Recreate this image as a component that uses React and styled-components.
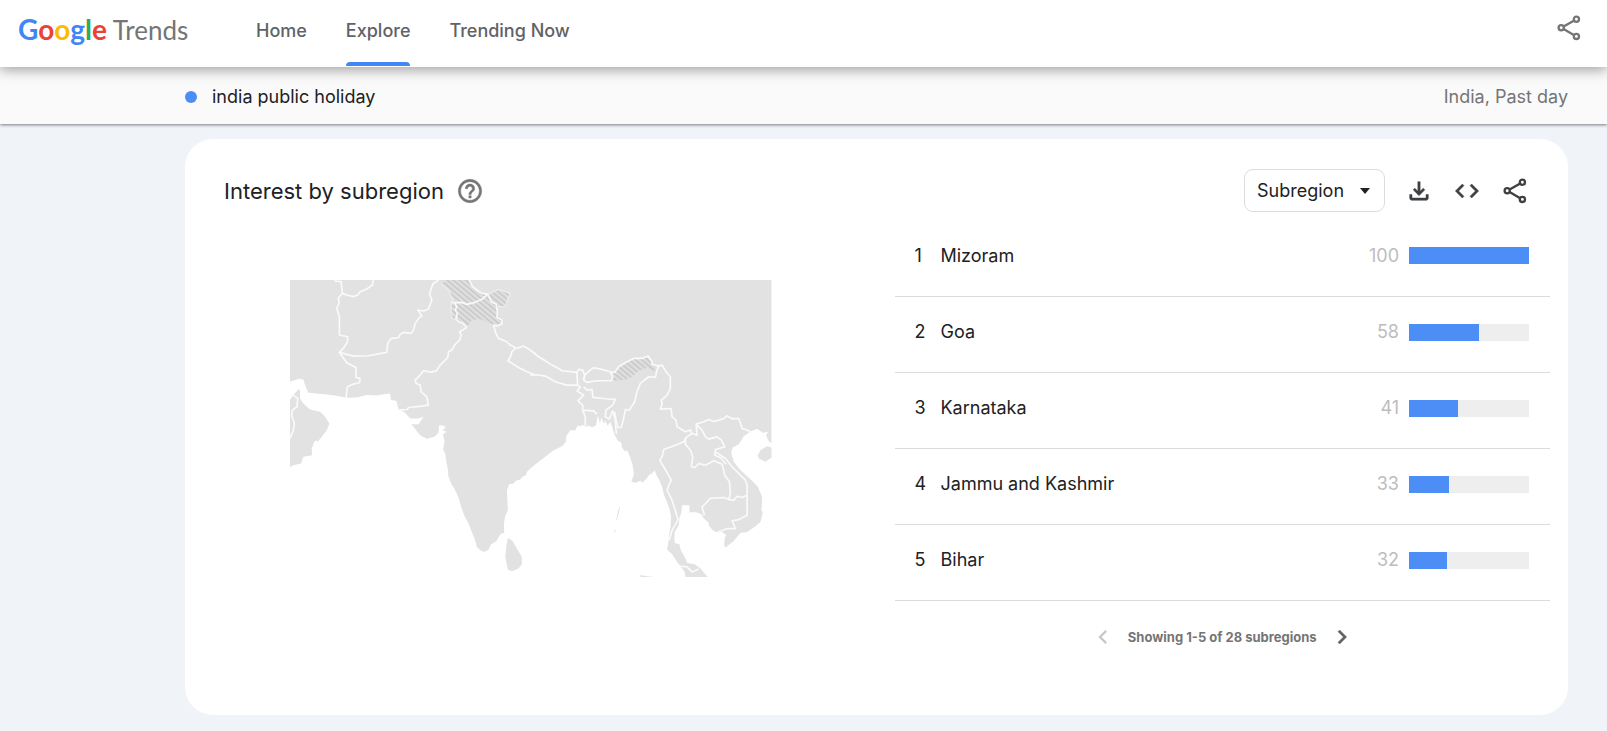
/*
 * TrendsPage
 *
 * Interest by subregion for a single search term
 */
import React from 'react';
import styled, { createGlobalStyle } from 'styled-components';
import {
  MdChevronLeft,
  MdChevronRight,
  MdCode,
  MdHelpOutline,
  MdOutlineFileDownload,
} from 'react-icons/md';

const GlobalStyle = createGlobalStyle`
  * {
    box-sizing: border-box;
  }

  body {
    margin: 0;
    background-color: #f0f4f9;
    color: #202124;
    font-family: Inter, 'Open Sans', sans-serif;
    font-size: 18px;
    line-height: 24px;
  }
`;

const TopBar = styled.header`
  position: relative;
  z-index: 2;
  display: flex;
  align-items: stretch;
  height: 67px;
  padding: 0 24px 0 18px;
  background-color: white;
  box-shadow: 0 3px 12px rgba(0, 0, 0, 0.36);
`;

const Logo = styled.a`
  width: 238px;
  padding-top: 11px;
  font-family: Lato, sans-serif;
  font-size: 26px;
  line-height: 36px;
  color: #757575;
  text-decoration: none;
  white-space: nowrap;
`;

const Letter = styled.span`
  color: ${(props) => props.$color};
  font-size: 28px;
  font-weight: 700;
`;

const Nav = styled.nav`
  display: flex;
  flex: 1;
  gap: 39px;
`;

const NavLink = styled.a`
  display: flex;
  flex-direction: column;
  justify-content: space-between;
  padding: 19px 0 1px;
  color: #5f6368;
  font-weight: 500;
  text-decoration: none;

  &[aria-current]::after {
    height: 4px;
    border-radius: 4px 4px 0 0;
    background-color: #4285f4;
    content: '';
  }
`;

const IconButton = styled.button`
  display: flex;
  align-items: center;
  justify-content: center;
  width: 28px;
  height: 28px;
  padding: 0;
  border: none;
  background: none;
  color: ${(props) => props.$color || '#3c4043'};
  font-size: 28px;
  cursor: pointer;

  /* the icon set ships an empty bounding path */
  path[fill='none'] {
    stroke: none;
  }

  &:disabled {
    color: #c8c8c8;
    cursor: default;
  }
`;

const TopActions = styled.div`
  padding-top: 14px;
`;

const TermBar = styled.div`
  position: relative;
  z-index: 1;
  display: flex;
  align-items: center;
  justify-content: space-between;
  height: 57px;
  padding: 2px 39px 0 185px;
  background-color: #fafafa;
  box-shadow: 0 1px 3px rgba(0, 0, 0, 0.5);
`;

const Term = styled.div`
  display: flex;
  align-items: center;
  gap: 15px;

  &::before {
    width: 12px;
    height: 12px;
    border-radius: 50%;
    background-color: #4c8df6;
    content: '';
  }
`;

const Scope = styled.div`
  color: #757575;
`;

const Card = styled.section`
  margin: 15px 39px 16px 185px;
  border-radius: 28px;
  background-color: white;
`;

const CardHeader = styled.div`
  display: flex;
  align-items: center;
  justify-content: space-between;
  padding: 30px 39px 8px;
`;

const Title = styled.h2`
  display: flex;
  align-items: center;
  gap: 12px;
  margin: 0;
  font-size: 22px;
  font-weight: 400;
  line-height: 28px;
`;

const Tools = styled.div`
  display: flex;
  align-items: center;
  gap: 20px;
`;

const SelectBox = styled.label`
  display: grid;
  align-items: center;

  > * {
    grid-area: 1 / 1;
  }

  svg {
    justify-self: end;
    margin-right: 15px;
    pointer-events: none;
  }
`;

const Select = styled.select`
  width: 141px;
  height: 43px;
  padding: 0 12px;
  border: 1px solid #dadce0;
  border-radius: 9px;
  background-color: white;
  color: #202124;
  font: inherit;
  appearance: none;
`;

const Columns = styled.div`
  display: grid;
  grid-template-columns: 1fr 1fr;
`;

const MapArea = styled.div`
  padding: 60px 105px 0;

  svg {
    display: block;
    width: 100%;
  }
`;

const ListArea = styled.div`
  padding: 0 18px 64px;
`;

const Table = styled.table`
  width: 100%;
  border-collapse: collapse;
`;

const Row = styled.tr`
  height: 76px;
  border-bottom: 1px solid #dcdcdc;
`;

const Cell = styled.td`
  width: ${(props) => props.$width || 'auto'};
  padding: 0 0 4px ${(props) => props.$indent || 0}px;
  text-align: ${(props) => props.$align || 'left'};
  color: ${(props) => (props.$muted ? '#bdbdbd' : 'inherit')};
`;

const Track = styled.div`
  width: 120px;
  height: 17px;
  margin: 0 21px 0 10px;
  background-color: #eee;
`;

const Fill = styled.div`
  height: 100%;
  background-color: #4c8df6;
`;

const Pager = styled.div`
  display: flex;
  align-items: center;
  justify-content: center;
  gap: 11px;
  padding-top: 22px;
  color: #757575;
  font-size: 13px;
  font-weight: 700;
`;

const subregions = [
  { name: 'Mizoram', value: 100 },
  { name: 'Goa', value: 58 },
  { name: 'Karnataka', value: 41 },
  { name: 'Jammu and Kashmir', value: 33 },
  { name: 'Bihar', value: 32 },
];

const logoLetters = [
  ['G', '#4285f4'],
  ['o', '#ea4335'],
  ['o', '#fbbc05'],
  ['g', '#4285f4'],
  ['l', '#34a853'],
  ['e', '#ea4335'],
];

const ShareIcon = () => (
  <svg width="28" height="28" viewBox="0 0 28 28" fill="none" stroke="currentColor" strokeWidth="2.3">
    <path d="M8.6 12.6L19.2 6.4M8.6 15L19.2 21.2" />
    <circle cx="6.2" cy="13.8" r="2.6" />
    <circle cx="21.4" cy="5.2" r="2.6" />
    <circle cx="21.4" cy="22.4" r="2.6" />
  </svg>
);

const RegionMap = () => (
  <svg viewBox="0 0 1443 891" role="img" aria-label="Map of India">
    <defs>
      <pattern id="disputed" width="12" height="12" patternUnits="userSpaceOnUse" patternTransform="rotate(-50)">
        <rect width="12" height="12" fill="#dedede" />
        <rect width="4" height="12" fill="#c6c6c6" />
      </pattern>
    </defs>

    {/* land */}
    <g fill="#e2e2e2">
      <path d="M0 0H1443V490L1433 480 1427 465 1433 455 1417 458 1400 446 1380 454 1360 468 1345 492 1327 502 1322 518 1330 545 1350 570 1385 602 1402 620 1415 650 1413 690 1417 695 1410 725 1390 742 1370 755 1350 758 1330 782 1305 802 1301 795 1303 772 1308 765 1295 755 1275 755 1265 748 1257 738 1253 725 1240 715 1233 702 1217 696 1197 696 1197 675 1175 675 1173 695 1167 715 1165 735 1153 755 1152 775 1153 788 1167 792 1171 810 1183 830 1191 848 1213 852 1230 865 1253 891H1185L1183 875 1170 858 1160 845 1145 822 1130 808 1135 780 1137 760 1141 735 1142 710 1138 688 1130 665 1121 645 1115 620 1107 600 1097 582 1093 570 1087 578 1075 585 1067 598 1055 608 1050 602 1037 608 1023 605 1031 582 1027 555 1017 525 1010 510 1004 514 995 502 993 488 982 480 973 465 967 445 960 425 952 437 945 422 940 430 933 412 929 430 923 405 917 435 905 442 896 436 885 442 878 434 870 438 862 436 855 450 840 450 827 470 827 485 815 498 790 510 765 530 730 557 710 575 707 585 697 590 690 598 677 602 670 610 657 612 650 630 651 650 652 675 653 690 645 708 641 730 642 758 633 760 625 770 619 782 603 792 595 808 583 815 570 810 560 800 553 775 543 750 533 725 523 708 513 680 505 652 495 630 483 610 475 590 473 568 468 540 465 520 459 508 463 485 459 462 470 455 457 450 467 442 459 436 447 435 445 458 433 470 410 476 390 465 370 440 363 432 385 432 397 415 400 410 385 415 360 415 347 400 335 392 325 388 321 370 318 362 303 360 300 340 285 342 260 346 230 345 200 352 170 353 135 346 95 342 55 338 47 320 40 298 27 296 0 305Z" />
      <path d="M0 360L10 345 25 328 30 330 30 355 40 370 60 388 90 395 105 410 118 430 110 450 95 470 83 485 78 480 73 485 65 505 66 525 40 530 33 550 10 555 0 561Z" />
      <path d="M653 773L667 782 680 805 695 830 695 852 685 865 665 873 653 868 645 830 648 800Z" />
      <path d="M1402 525L1410 510 1430 498 1443 502V532L1425 545 1405 535Z" />
      <path d="M1050 884L1065 887 1097 891H1050Z" />
      <path d="M989 675L984 690 981 705 977 720 979 720 984 705 987 692Z" />
      <path d="M972 748h3v8h-3z" />
    </g>

    {/* disputed areas */}
    <g fill="url(#disputed)">
      <path d="M453 12L470 0H537L547 20 565 35 593 42 625 28 660 40 650 60 645 80 618 80 625 100 637 125 625 133 610 135 570 117 545 120 530 142 500 120 485 115 482 75 490 65 475 30Z" />
      <path d="M967 280L985 260 1010 245 1030 235 1055 235 1070 230 1080 242 1085 252 1100 268 1090 272 1070 263 1045 272 1025 290 1005 300 967 302Z" />
    </g>

    {/* borders */}
    <g fill="none" stroke="#fafafa" strokeWidth="5" strokeLinejoin="round">
      <g transform="translate(-15 -30)">
        <path d="M147 33L168 35 172 70 160 85 162 100 155 115 163 140 163 195 188 200 187 215 175 235 163 247 205 258 250 257 305 247 308 220 318 205 340 203 345 193 355 187 378 190 386 178 390 160 403 142 410 138 398 120 415 123 430 117 440 90 433 72 443 42 460 30" />
        <path d="M172 70L185 75 205 80 218 75 225 65 245 57 262 45 265 30M163 247L185 278 213 292 213 322 225 325 223 338 205 342 187 350 183 383" />
        <path d="M545 172L523 185 528 195 523 210 508 225 500 240 490 245 488 262 465 285 453 303 435 306 415 302 405 315 390 330 393 340 405 345 408 365 425 380 430 405 410 408 370 412 367 418 340 420" />
        <path d="M497 98L530 97 545 103 570 97 590 88 608 72 590 70 575 60 562 50 552 30M508 97L515 110 510 120 517 130 512 145 520 155 530 158 545 172" />
        <path d="M608 72L618 95 633 103 637 130 635 142 650 150 650 162 635 168 625 165 632 190 640 205 665 215 675 225 695 235 715 228 735 240 750 250M690 235L680 245 676 260 668 272 700 292 725 305 750 315" />
        <path d="M25 375L38 385 36 410 22 420 20 435 28 460 25 480 15 505" />
      </g>
      <path d="M453 12L475 30 490 65 482 75 485 115 500 120M593 42L625 28 660 40 645 80 618 80" stroke="#ececec" strokeWidth="4" />
      <g transform="translate(705 180)">
        <path d="M15 30L40 50 60 62 80 75 100 85 110 92 155 97 160 88 172 90 178 105 175 120M15 105L35 104 60 108 90 125 125 135 157 135 155 97" />
        <path d="M175 120L180 103 195 90 205 83 230 88 255 95 262 112 258 122 215 122 185 127ZM258 97L268 97 280 80 305 65 325 55 350 55 368 48 380 65 380 72 400 78 395 90 390 112 370 110 345 130 335 155 328 185 312 210 300 208 295 235 288 262 278 262 272 240 268 215" />
        <path d="M400 78L410 75 422 95 435 110 435 145 425 165 408 180 410 192 405 207 437 205 440 230 452 240 455 260 480 275 495 270 500 280 485 290 475 305 450 315 415 328 410 350 403 360M480 292L480 312 495 330 502 350 498 380" />
        <path d="M157 135L165 142 155 152 175 165 158 182 172 195 172 210 180 230 180 262M175 140L185 150 200 148 203 172 240 176 270 178 262 195 242 210 240 230 252 237 262 212 270 240 273 282M172 210L205 212 215 222" />
        <path d="M500 280L515 285 512 252 535 245 550 238 565 244 580 240 595 235 605 227 620 236 640 235 650 265 665 270 680 278M515 255L530 270 540 290 550 297 575 290 588 300 598 320 570 328 568 345 585 352 602 372" />
      </g>
      <g transform="translate(705 510)">
        <path d="M403 30L418 55 432 80 438 90 432 100 425 120 438 145 448 175 458 208 440 240 432 270M498 50L508 52 520 40 540 45 565 32 590 42 598 75 612 95 615 130 610 148" />
        <path d="M570 5L600 25 620 50 650 80 660 90 665 105 665 135 650 142 635 138 625 150 610 148 595 142 555 144 540 160 530 170 537 195M665 135L665 195 640 208 620 212 630 235 605 235 575 247M465 348L485 350 500 365 520 356" />
      </g>
    </g>
  </svg>
);

export default class TrendsPage extends React.Component {
  constructor(props) {
    super(props);
    this.state = {
      resolution: 'Subregion',
    };
    this.handleResolution = this.handleResolution.bind(this);
  }

  handleResolution(e) {
    this.setState({ resolution: e.target.value });
  }

  render() {
    return (
      <div>
        <GlobalStyle />
        <TopBar>
          <Logo href="#home">
            {logoLetters.map(([letter, color], i) => (
              <Letter key={i} $color={color}>{letter}</Letter>
            ))}
            {' Trends'}
          </Logo>
          <Nav>
            <NavLink href="#home">Home</NavLink>
            <NavLink href="#explore" aria-current="page">Explore</NavLink>
            <NavLink href="#trending">Trending Now</NavLink>
          </Nav>
          <TopActions>
            <IconButton aria-label="Share page" $color="#757575"><ShareIcon /></IconButton>
          </TopActions>
        </TopBar>
        <TermBar>
          <Term>india public holiday</Term>
          <Scope>India, Past day</Scope>
        </TermBar>
        <Card>
          <CardHeader>
            <Title>
              Interest by subregion
              <IconButton aria-label="Help" $color="#757575"><MdHelpOutline strokeWidth="0.4" /></IconButton>
            </Title>
            <Tools>
              <SelectBox>
                <Select
                  aria-label="Resolution"
                  value={this.state.resolution}
                  onChange={this.handleResolution}
                >
                  <option>Subregion</option>
                  <option>City</option>
                </Select>
                <svg width="10" height="6" viewBox="0 0 10 6"><path d="M0 0h10L5 6z" fill="#202124" /></svg>
              </SelectBox>
              <IconButton aria-label="Download"><MdOutlineFileDownload strokeWidth="0.4" /></IconButton>
              <IconButton aria-label="Embed"><MdCode strokeWidth="0.4" /></IconButton>
              <IconButton aria-label="Share"><ShareIcon /></IconButton>
            </Tools>
          </CardHeader>
          <Columns>
            <MapArea>
              <RegionMap />
            </MapArea>
            <ListArea>
              <Table>
                <tbody>
                  {subregions.map((region, i) => (
                    <Row key={region.name}>
                      <Cell $width="46px" $indent={20}>{i + 1}</Cell>
                      <Cell>{region.name}</Cell>
                      <Cell $width="60px" $align="right" $muted>{region.value}</Cell>
                      <Cell $width="151px">
                        <Track>
                          <Fill style={{ width: `${region.value}%` }} />
                        </Track>
                      </Cell>
                    </Row>
                  ))}
                </tbody>
              </Table>
              <Pager>
                <IconButton aria-label="Previous" disabled><MdChevronLeft /></IconButton>
                Showing 1-5 of 28 subregions
                <IconButton aria-label="Next" $color="#616161"><MdChevronRight strokeWidth="0.4" /></IconButton>
              </Pager>
            </ListArea>
          </Columns>
        </Card>
      </div>
    );
  }
}
